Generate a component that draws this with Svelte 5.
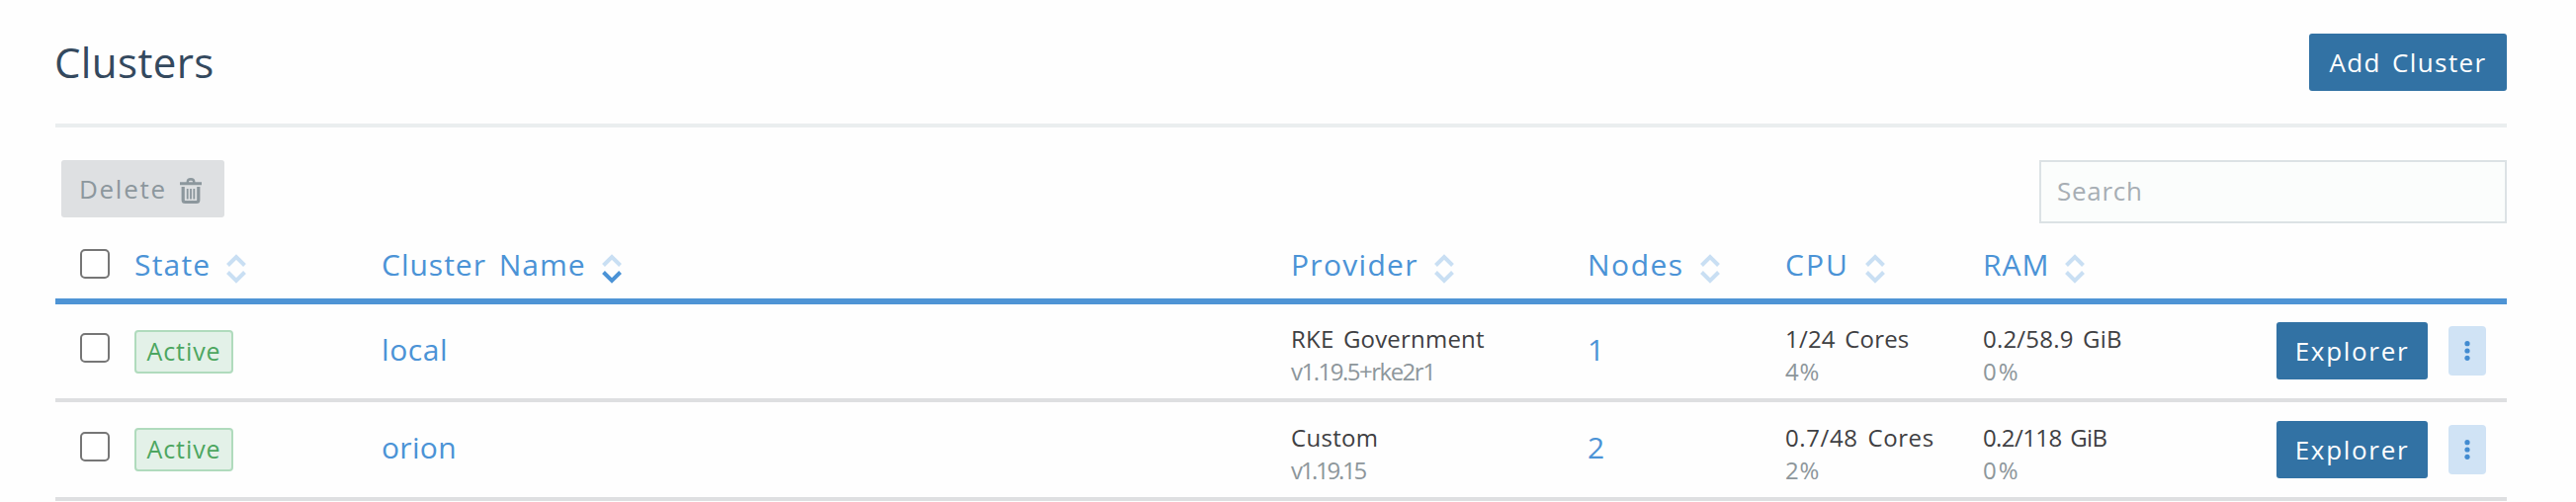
<script>
  const columns = [
    { label: 'State', ls: 1.2 },
    { label: 'Cluster Name', ls: 1, sorted: true },
    { label: 'Provider', ls: 1.3 },
    { label: 'Nodes', ls: 1.5 },
    { label: 'CPU', ls: 2 },
    { label: 'RAM', ls: 1 }
  ];
  const clusters = [
    {
      state: 'Active',
      name: ['local', 0.6],
      provider: ['RKE Government', 0.2],
      version: ['v1.19.5+rke2r1', -1.5],
      nodes: '1',
      cpu: ['1/24 Cores', 0.2],
      cpuUse: ['4%', 0.8],
      ram: ['0.2/58.9 GiB', 0.2],
      ramUse: ['0%', 2]
    },
    {
      state: 'Active',
      name: ['orion', 0.3],
      provider: ['Custom', 0.3],
      version: ['v1.19.15', -2.3],
      nodes: '2',
      cpu: ['0.7/48 Cores', 0.6],
      cpuUse: ['2%', 0.8],
      ram: ['0.2/118 GiB', -0.6],
      ramUse: ['0%', 2]
    }
  ];
</script>

{#snippet pair(top, bottom)}
  <div class="pair">
    <span style:letter-spacing="{top[1]}px">{top[0]}</span>
    <span class="muted" style:letter-spacing="{bottom[1]}px">{bottom[0]}</span>
  </div>
{/snippet}

<main>
  <header>
    <h1>Clusters</h1>
    <button class="primary add">Add Cluster</button>
  </header>

  <div class="toolbar">
    <button class="delete" disabled>
      <span>Delete</span>
      <svg width="22" height="27" viewBox="0 0 22 27">
        <path d="M0 4.300h6.500C6.500 1.500 8 0 11 0s4.500 1.500 4.500 4.300H22v3H0zM9 4.300h4c0-1.200-.6-1.600-2-1.600s-2 .4-2 1.600z" fill="currentColor" fill-rule="evenodd" />
        <path d="M3.200 9v13.500q0 2 2 2h11.600q2 0 2-2V9" fill="none" stroke="currentColor" stroke-width="3.200" />
        <path d="M7.700 11v10.500M11 11v10.500M14.300 11v10.500" stroke="currentColor" stroke-width="1.800" />
      </svg>
    </button>
    <input type="text" placeholder="Search" />
  </div>

  <div class="row head">
    <span class="check"></span>
    {#each columns as c}
      <div class="th">
        <span style:letter-spacing="{c.ls}px">{c.label}</span>
        <svg class="sort" width="20" height="30" viewBox="0 0 20 30" fill="none" stroke-width="4">
          <path d="M1.500 11.500 10 3l8.500 8.500" stroke="#c9dff3" />
          <path d="M1.500 18.500 10 27l8.500-8.500" stroke={c.sorted ? '#4b93d6' : '#c9dff3'} />
        </svg>
      </div>
    {/each}
  </div>

  {#each clusters as c}
    <div class="row body">
      <span class="check"></span>
      <div><span class="badge">{c.state}</span></div>
      <a class="link" style:letter-spacing="{c.name[1]}px">{c.name[0]}</a>
      {@render pair(c.provider, c.version)}
      <a class="link">{c.nodes}</a>
      {@render pair(c.cpu, c.cpuUse)}
      {@render pair(c.ram, c.ramUse)}
      <div class="actions">
        <button class="primary explorer">Explorer</button>
        <button class="more" aria-label="Actions">
          <svg width="6" height="20" viewBox="0 0 6 20" fill="#428bd0">
            <circle cx="3" cy="2.700" r="2.600" /><circle cx="3" cy="10" r="2.600" /><circle cx="3" cy="17.300" r="2.600" />
          </svg>
        </button>
      </div>
    </div>
  {/each}
</main>

<style>
  :global(body) { background: #fefefe; overflow: hidden; }
  * { box-sizing: border-box; }
  main {
    width: 2480px;
    height: 508px;
    margin-left: 56px;
    font-family: "Open Sans", sans-serif;
    font-weight: 400;
    color: #3f4043;
  }
  button, input { font: inherit; margin: 0; border: 0; }
  header {
    height: 129px;
    padding-top: 34px;
    display: flex;
    justify-content: space-between;
    align-items: flex-start;
    border-bottom: 4px solid #eaeeef;
  }
  h1 {
    margin: 0;
    font-size: 42px;
    line-height: 58px;
    font-weight: inherit;
    letter-spacing: 0.4px;
    color: #34495e;
    margin-left: -1px;
  }
  .primary {
    height: 58px;
    padding: 0;
    border-radius: 3px;
    background: #3272a4;
    color: #fff;
    font-size: 26px;
    text-align: center;
  }
  .add { width: 200px; letter-spacing: 1.4px; word-spacing: 3px; }
  .toolbar {
    height: 97px;
    padding: 33px 0 0 6px;
    display: flex;
    justify-content: space-between;
    align-items: flex-start;
  }
  .delete {
    width: 165px;
    height: 58px;
    padding: 0 0 0 18px;
    border-radius: 3px;
    background: #dee0e2;
    color: #8c979d;
    font-size: 26px;
    letter-spacing: 1.700px;
    display: flex;
    align-items: center;
    gap: 13px;
  }
  .delete svg { margin-top: 4px; }
  input {
    width: 473px;
    height: 64px;
    padding: 0 17px 2px 16px;
    border: 2px solid #dce2e5;
    border-radius: 0;
    background: #fbfdfc;
    font-size: 26px;
    letter-spacing: 0.700px;
  }
  input::placeholder { color: #a7aeb4; opacity: 1; }
  .row {
    display: grid;
    grid-template-columns: 80px 250px 920px 300px 200px 200px 240px 1fr;
    align-items: center;
  }
  .head {
    height: 82px;
    border-bottom: 6px solid #4e94d5;
    color: #4b93d6;
    font-size: 30px;
  }
  .check {
    width: 30px;
    height: 30px;
    margin-left: 25px;
    border: 2px solid #767676;
    border-radius: 5px;
    background: #fff;
  }
  .head .check { margin-top: 5px; }
  .th { display: flex; align-items: center; gap: 16px; padding-top: 7px; word-spacing: 4px; }
  .sort { margin-top: 8px; }
  .body { height: 99px; border-bottom: 4px solid #dedfe1; }
  .body + .body { height: 100px; }
  .body .check { margin-top: -7px; }
  .badge {
    display: block;
    width: 100px;
    height: 44px;
    border: 2px solid #b0dbbd;
    border-radius: 4px;
    background: #e3f1e8;
    color: #4ca660;
    font-size: 25px;
    line-height: 38px;
    text-align: center;
    letter-spacing: 0.900px;
  }
  .link { color: #4b93d6; font-size: 30px; margin-top: -5px; }
  .pair {
    display: flex;
    flex-direction: column;
    font-size: 24px;
    line-height: 33px;
    word-spacing: 3px;
    padding-top: 7px;
  }
  .muted { color: #8d969b; }
  .actions { display: flex; align-items: center; gap: 21px; padding-left: 57px; margin-top: -1px; }
  .explorer { width: 153px; letter-spacing: 1.700px; }
  .more {
    width: 38px;
    height: 50px;
    padding: 0;
    border-radius: 4px;
    background: #d0e3f5;
    display: flex;
    align-items: center;
    justify-content: center;
  }
</style>
